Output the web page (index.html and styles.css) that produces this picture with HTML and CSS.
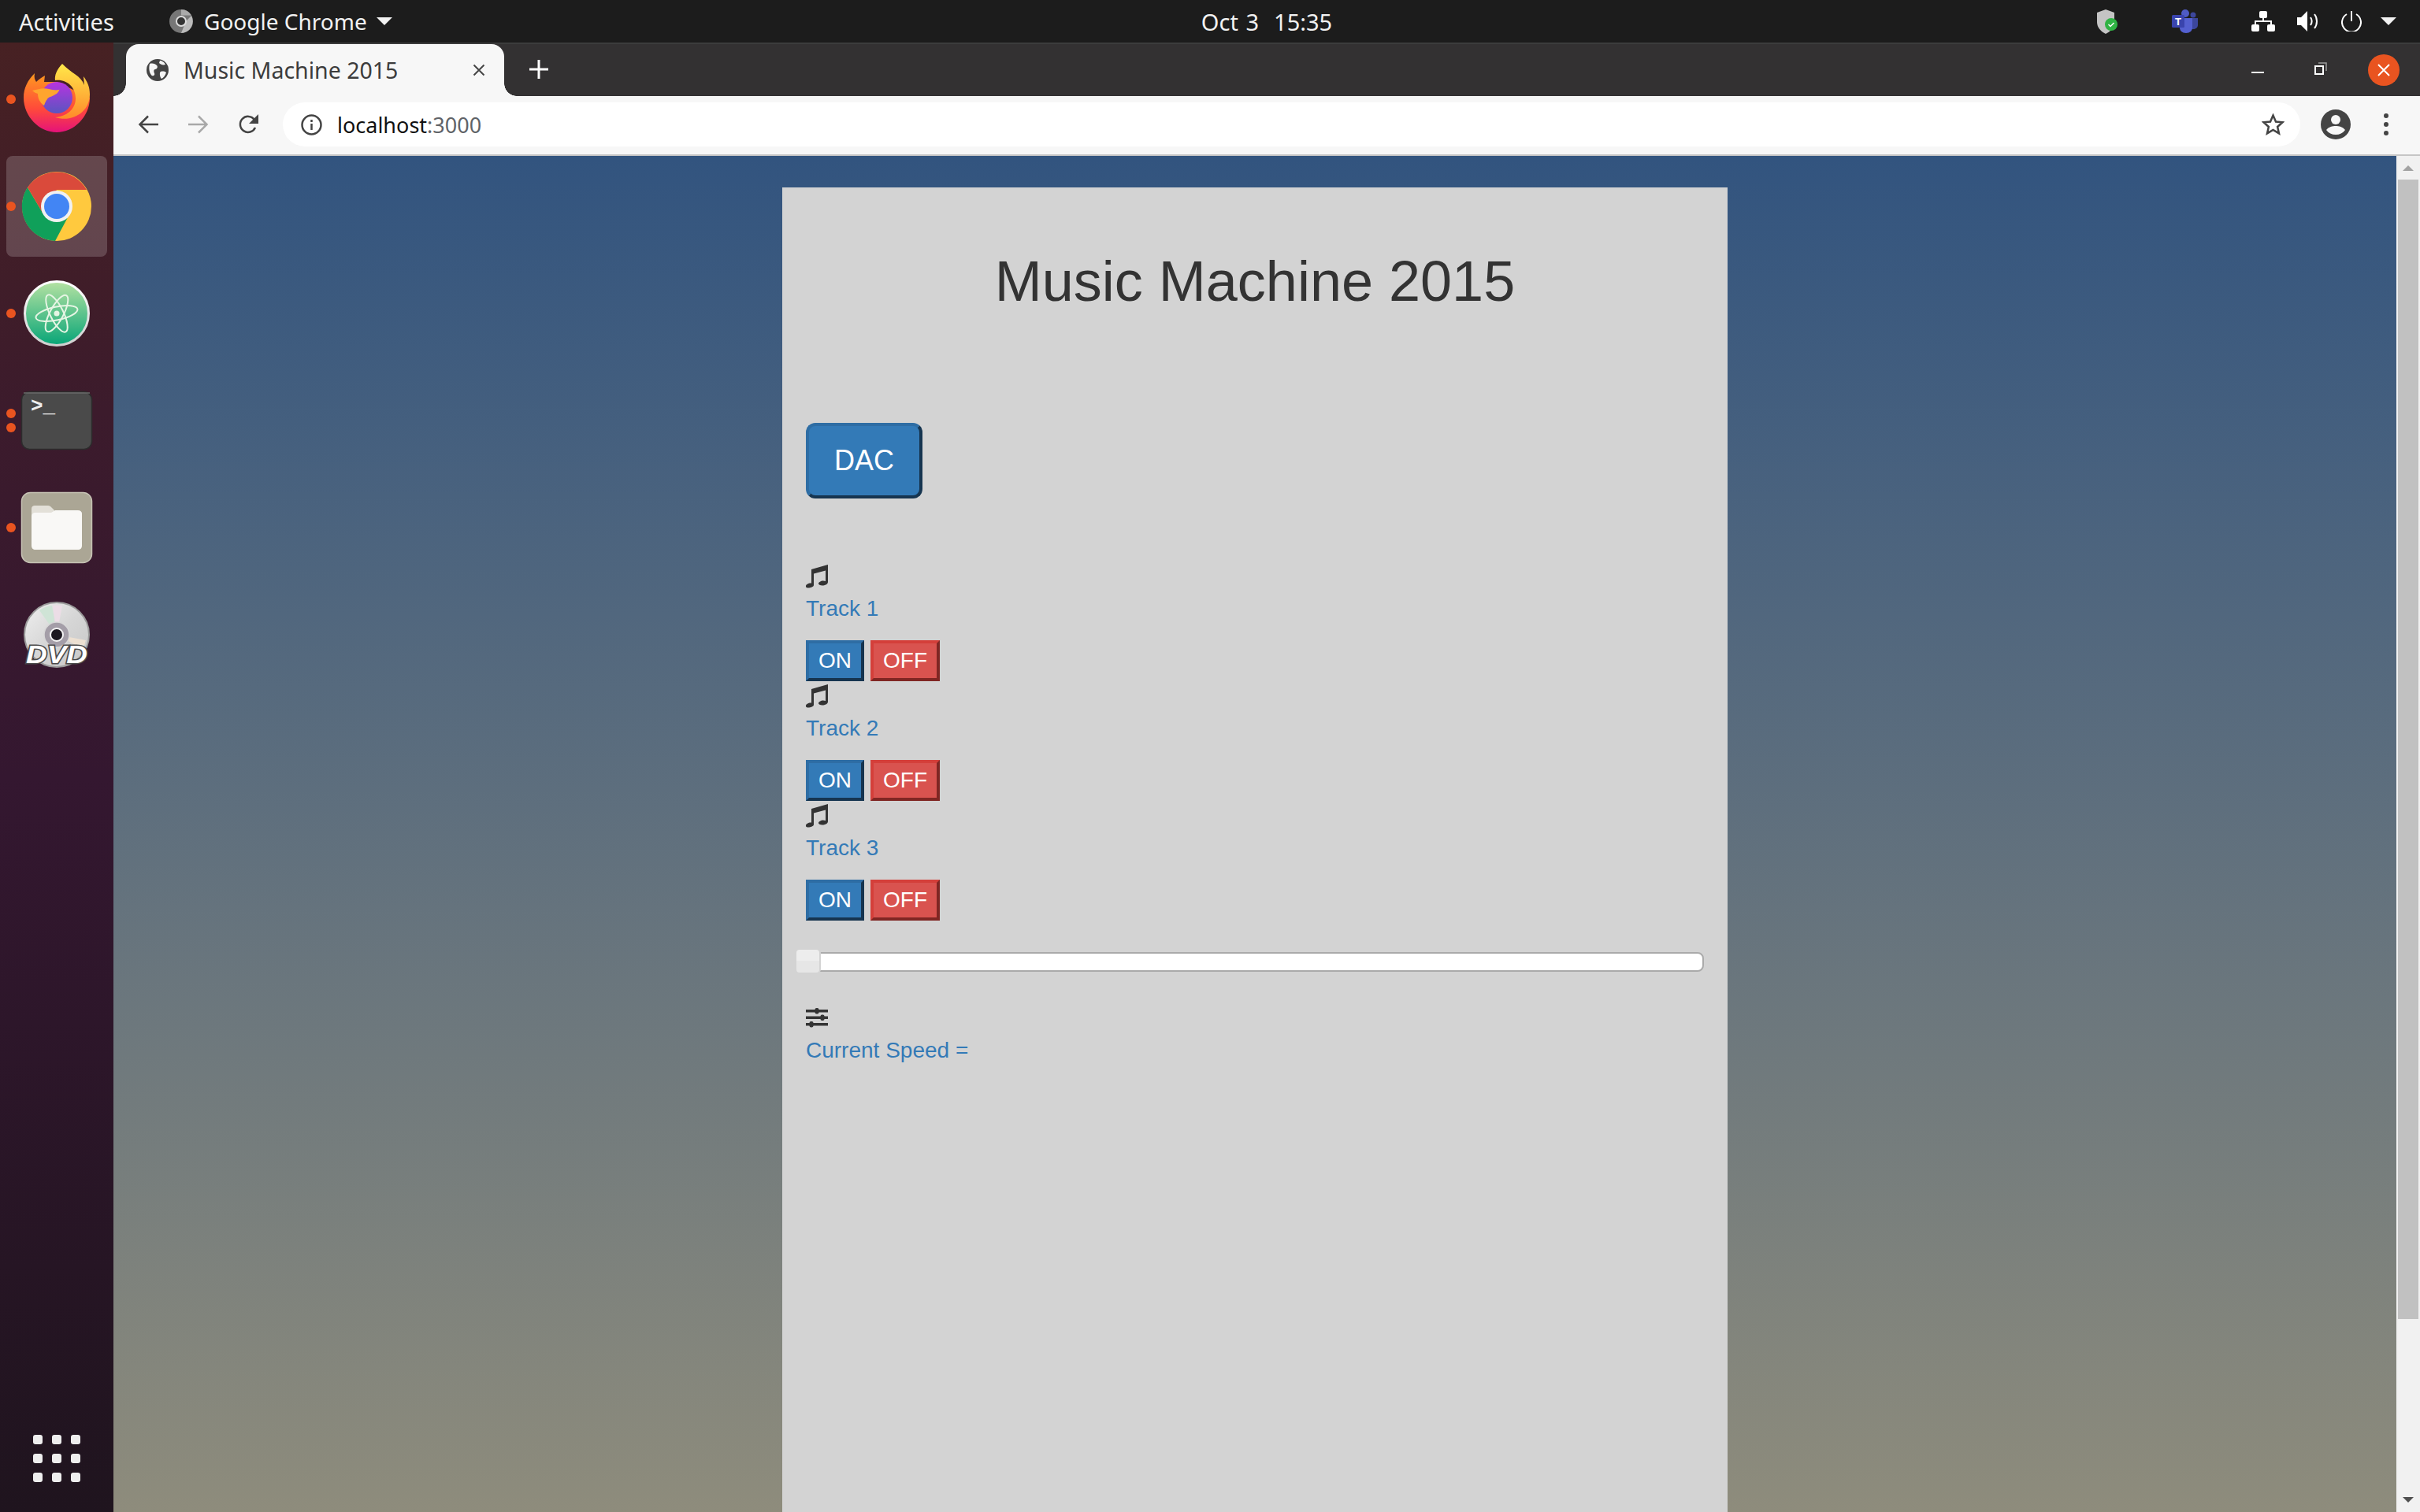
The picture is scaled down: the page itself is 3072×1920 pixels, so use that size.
FILE: index.html
```html
<!DOCTYPE html>
<html lang="en">
<head>
  <meta charset="UTF-8" />
  <title>Music Machine 2015</title>
  <link rel="stylesheet" href="styles.css">
</head>
<body>
  <div class="topbar">
    <div class="topbar-left">
      <span class="activities">Activities</span>
      <svg class="app-glyph" viewBox="0 0 30 30"><circle cx="15" cy="15" r="15" fill="#777"/><path d="M15 0a15 15 0 0 1 13 7.500H15z" fill="#aaa"/><path d="M15 30a15 15 0 0 0 13-22l-7 7z" fill="#bbb"/><circle cx="15" cy="15" r="6" fill="#333" stroke="#ddd" stroke-width="2"/></svg>
      <span class="app-name">Google Chrome</span>
      <span class="caret"></span>
    </div>
    <div class="clock">Oct 3&nbsp; 15:35</div>
    <div class="tray">
      <svg class="tray-shield" viewBox="0 0 26 31"><path d="M11 0l11 4v12c0 7-5 12-11 15C5 28 0 23 0 16V4z" fill="#c4c4c4"/><circle cx="18" cy="19" r="8" fill="#2fb344"/><path d="M14.500 19l2.500 2.500 4.500-4.500" fill="none" stroke="#fff" stroke-width="1.500"/></svg>
      <svg class="tray-teams" viewBox="0 0 33 30"><circle cx="17" cy="5" r="5" fill="#4f5bc4"/><circle cx="27" cy="7" r="3.500" fill="#3c469c"/><path d="M22 11h11v9c0 3-3 5-6 5h-5z" fill="#3c469c"/><path d="M10 11h16v12c0 4-3 7-8 7s-8-3-8-7z" fill="#5460d0"/><rect x="0" y="7" width="16" height="16" rx="1.500" fill="#3a44ad"/><text x="8" y="19.500" class="teams-t">T</text></svg>
      <svg class="tray-net" viewBox="0 0 30 26"><path d="M15 8v5M5 18v-5h20v5" fill="none" stroke="#fff" stroke-width="2"/><rect x="10" y="0" width="10" height="9" rx="2" fill="#fff"/><rect x="0" y="17" width="10" height="9" rx="2" fill="#fff"/><rect x="20" y="17" width="10" height="9" rx="2" fill="#fff"/></svg>
      <svg class="tray-vol" viewBox="0 0 28 26"><path d="M0 8h5l8-8v26l-8-8H0z" fill="#fff"/><path d="M17 8c2 3 2 7 0 10M22 4c4 5 4 13 0 18" fill="none" stroke="#fff" stroke-width="2"/></svg>
      <svg class="tray-power" viewBox="0 0 26 26"><path d="M7 4a12 12 0 1 0 12 0M13 0v13" fill="none" stroke="#fff" stroke-width="2"/></svg>
      <span class="caret caret-tray"></span>
    </div>
  </div>

  <div class="workspace">
    <nav class="dock">
      <div class="dock-slot">
        <span class="run-dot"></span>
        <svg class="dock-icon" viewBox="0 0 96 96">
          <defs>
            <linearGradient id="ffBody" x1="0" y1="0" x2="0" y2="1"><stop offset="0" stop-color="#ff9a1f"/><stop offset=".6" stop-color="#ff4a3a"/><stop offset="1" stop-color="#e5127a"/></linearGradient>
            <linearGradient id="ffFlame" x1="0" y1="0" x2="0" y2="1"><stop offset="0" stop-color="#ffe84a"/><stop offset="1" stop-color="#ff8a2a"/></linearGradient>
            <linearGradient id="ffGlobe" x1="0" y1="0" x2="0" y2="1"><stop offset="0" stop-color="#b833e0"/><stop offset="1" stop-color="#5a55c0"/></linearGradient>
          </defs>
          <path d="M6 46c0-12 5-22 14-31-1 5 0 8 2 11 3-3 7-6 11-8l-1 8h16l42 20c0 24-20 44-42 44S6 70 6 46z" fill="url(#ffBody)"/>
          <path d="M55 3c-7 7-10 15-9 21 14-2 26 8 26 23 0 14-12 23-26 24 22 7 44-7 44-29 0-10-3-16-8-23l1 11C79 18 66 15 55 3z" fill="url(#ffFlame)"/>
          <circle cx="48" cy="46" r="20" fill="url(#ffGlobe)"/>
          <path d="M17 37c8-2 14-4 21-2 4 1 9 2 13 1 1-2 0 4-5 6-4 3-9 3-10 6-2 2-3 5-4 8-6-4-8-10-8-15-3-1-5-2-7-4z" fill="#ffa52e"/>
        </svg>
      </div>
      <div class="dock-slot dock-slot-active">
        <span class="run-dot"></span>
        <svg class="dock-icon" viewBox="0 0 96 96">
          <circle cx="48" cy="48" r="44" fill="#ffc93e"/>
          <path d="M11 24L30 56l32 6-16 30A44 44 0 0 1 11 24z" fill="#10a05a"/>
          <path d="M11 24A44 44 0 0 1 86 27H48L30 56z" fill="#da4a3b"/>
          <circle cx="48" cy="48" r="20" fill="#f1f1f1"/>
          <circle cx="48" cy="48" r="16" fill="#4285f4"/>
        </svg>
      </div>
      <div class="dock-slot">
        <span class="run-dot"></span>
        <svg class="dock-icon" viewBox="0 0 96 96">
          <defs>
            <linearGradient id="atomBg" x1="0" y1="0" x2="0" y2="1"><stop offset="0" stop-color="#b5e2a2"/><stop offset="1" stop-color="#07a577"/></linearGradient>
            <linearGradient id="atomRim" x1="0" y1="0" x2="0" y2="1"><stop offset="0" stop-color="#ffffff"/><stop offset="1" stop-color="#cfcfcf"/></linearGradient>
          </defs>
          <circle cx="48" cy="48" r="40.500" fill="url(#atomBg)" stroke="url(#atomRim)" stroke-width="3"/>
          <g fill="none" stroke="#e6f5e4" stroke-width="2">
            <ellipse cx="48" cy="48" rx="27" ry="8.500" transform="rotate(-12 48 48)"/>
            <ellipse cx="48" cy="48" rx="26" ry="8.500" transform="rotate(64 48 48)"/>
            <ellipse cx="48" cy="48" rx="26" ry="8.500" transform="rotate(118 48 48)"/>
          </g>
          <circle cx="48" cy="48" r="3.500" fill="#e6f5e4"/>
        </svg>
      </div>
      <div class="dock-slot">
        <span class="run-dot run-dot-upper"></span>
        <span class="run-dot run-dot-lower"></span>
        <svg class="dock-icon" viewBox="0 0 96 96">
          <rect x="3.500" y="11.500" width="89" height="73" rx="10" fill="#4a4a4a" stroke="#2c2c2c" stroke-width="1.500"/>
          <path d="M6 13h84" stroke="#6a6a6a" stroke-width="1.500"/>
          <text x="15" y="37" class="term-prompt">&gt;_</text>
        </svg>
      </div>
      <div class="dock-slot">
        <span class="run-dot"></span>
        <svg class="dock-icon" viewBox="0 0 96 96">
          <rect x="3.500" y="3.500" width="89" height="89" rx="11" fill="#aba695" stroke="#c6c2b4" stroke-width="1.500"/>
          <path d="M16 24c0-3 2-4 4-4h6 c0 0 0 0 0 0h2l2 0h7c2 0 3 1 4 2l4 4v10H16z" fill="#e3e0d8"/>
          <path d="M16 34c0-3 2-5 5-5h20l5-3h29c3 0 5 2 5 4v41c0 3-2 5-5 5H21c-3 0-5-2-5-5z" fill="#f9f8f6"/>
        </svg>
      </div>
      <div class="dock-slot">
        <svg class="dock-icon" viewBox="0 0 96 96">
          <defs>
            <linearGradient id="discBg" x1="0" y1="0" x2="1" y2="1"><stop offset="0" stop-color="#efefef"/><stop offset=".5" stop-color="#d6d6d6"/><stop offset="1" stop-color="#c6c6c6"/></linearGradient>
          </defs>
          <circle cx="48" cy="48" r="41" fill="url(#discBg)" stroke="#9a9a9a" stroke-width="2"/>
          <path d="M48 48L26 17a38 38 0 0 1 16-6z" fill="#cfe4d6"/>
          <path d="M48 48L43 11a38 38 0 0 1 12 0z" fill="#ecdde6"/>
          <path d="M48 48L85 55a38 38 0 0 1-4 11z" fill="#ece0d2"/>
          <circle cx="48" cy="48" r="16" fill="#a49ea8" stroke="#d8d8d8" stroke-width="1.500"/>
          <circle cx="48" cy="48" r="8" fill="#1c1820" stroke="#f5f5f5" stroke-width="2"/>
          <text x="9" y="84" textLength="78" lengthAdjust="spacingAndGlyphs" class="dvd-mark">DVD</text>
        </svg>
      </div>
      <div class="apps-grid">
        <span></span><span></span><span></span>
        <span></span><span></span><span></span>
        <span></span><span></span><span></span>
      </div>
    </nav>

    <div class="browser">
      <div class="tabstrip">
        <div class="tab">
          <svg class="favicon" viewBox="0 0 28 28"><circle cx="14" cy="14" r="14" fill="#444"/><path d="M4 6c4-1 7 0 9 2s0 5-2 5-2 3-1 5-1 4-3 3S2 14 4 6zM18 16c3-1 6 0 7 1-1 4-4 7-6 8-2-2-3-8-1-9zM17 2c2 0 6 2 7 5-3 1-6 0-8-2z" fill="#f6f6f6"/></svg>
          <span class="tab-title">Music Machine 2015</span>
          <svg class="tab-close" viewBox="0 0 16 16"><path d="M1.500 1.500l13 13M14.500 1.500l-13 13" stroke="#444" stroke-width="2"/></svg>
        </div>
        <svg class="new-tab" viewBox="0 0 24 24"><path d="M12 0v24M0 12h24" stroke="#fff" stroke-width="3"/></svg>
        <div class="window-controls">
          <span class="win-min"></span>
          <svg class="win-restore" viewBox="0 0 16 16"><path d="M5 1h10v10" fill="none" stroke="#9a9a9a" stroke-width="1.500"/><rect x="1" y="5" width="10" height="10" fill="none" stroke="#fff" stroke-width="2"/></svg>
          <span class="win-close"><svg viewBox="0 0 16 16"><path d="M1 1l14 14M15 1L1 15" stroke="#fff" stroke-width="2"/></svg></span>
        </div>
      </div>

      <div class="toolbar">
        <svg class="nav-icon" viewBox="0 0 26 24"><path d="M26 12H3M13 1.500L2.500 12 13 22.500" fill="none" stroke="#444" stroke-width="2.500"/></svg>
        <svg class="nav-icon nav-forward" viewBox="0 0 26 24"><path d="M0 12h23M13 1.500L23.500 12 13 22.500" fill="none" stroke="#a8a8a8" stroke-width="2.500"/></svg>
        <svg class="nav-icon nav-reload" viewBox="0 0 26 26"><path d="M21 17a10 10 0 1 1-1-10" fill="none" stroke="#444" stroke-width="2.500"/><path d="M25 0v12H13z" fill="#444"/></svg>
        <div class="omnibox">
          <svg class="info-icon" viewBox="0 0 27 27"><circle cx="13.500" cy="13.500" r="12" fill="none" stroke="#444" stroke-width="2.500"/><path d="M13.500 12v8M13.500 7v3" stroke="#444" stroke-width="2.500"/></svg>
          <span class="url">localhost<span class="url-port">:3000</span></span>
          <svg class="star-icon" viewBox="0 0 29 28"><path d="M14.500 2.500l3.500 8 8.500.8-6.400 5.700 1.900 8.400-7.500-4.400-7.500 4.400 1.900-8.400L2.500 11.300l8.500-.8z" fill="none" stroke="#444" stroke-width="2.500"/></svg>
        </div>
        <svg class="avatar-icon" viewBox="0 0 38 38"><circle cx="19" cy="19" r="19" fill="#444"/><circle cx="19" cy="13" r="6" fill="#f7f7f7"/><path d="M7 26c3-4 8-5 12-5s9 1 12 5c-3 4-7 6-12 6s-9-2-12-6z" fill="#f7f7f7"/></svg>
        <div class="kebab"><span></span><span></span><span></span></div>
      </div>

      <div class="viewport">
        <div class="page">
          <main class="card">
            <h1>Music Machine 2015</h1>
            <button class="btn-dac">DAC</button>

            <section class="tracks">
              <div class="track">
                <svg class="glyph" viewBox="0 0 28 40"><path class="note" d="M7 10L28 4V26c0 3-4 4.500-7 4.500s-5-1-5-2.500 3-3.500 6-3.500c1 0 2 .2 3 .5V11.500L10 15.500V30c0 2-4 3.500-7 3.500S0 32.500 0 31s3-3.500 6-3.500c.5 0 .8 0 1 .1z"/></svg>
                <div class="label">Track 1</div>
                <div class="switches"><button class="btn-on">ON</button><button class="btn-off">OFF</button></div>
              </div>
              <div class="track">
                <svg class="glyph" viewBox="0 0 28 40"><path class="note" d="M7 10L28 4V26c0 3-4 4.500-7 4.500s-5-1-5-2.500 3-3.500 6-3.500c1 0 2 .2 3 .5V11.500L10 15.500V30c0 2-4 3.500-7 3.500S0 32.500 0 31s3-3.500 6-3.500c.5 0 .8 0 1 .1z"/></svg>
                <div class="label">Track 2</div>
                <div class="switches"><button class="btn-on">ON</button><button class="btn-off">OFF</button></div>
              </div>
              <div class="track">
                <svg class="glyph" viewBox="0 0 28 40"><path class="note" d="M7 10L28 4V26c0 3-4 4.500-7 4.500s-5-1-5-2.500 3-3.500 6-3.500c1 0 2 .2 3 .5V11.500L10 15.500V30c0 2-4 3.500-7 3.500S0 32.500 0 31s3-3.500 6-3.500c.5 0 .8 0 1 .1z"/></svg>
                <div class="label">Track 3</div>
                <div class="switches"><button class="btn-on">ON</button><button class="btn-off">OFF</button></div>
              </div>
            </section>

            <div class="slider"><span class="slider-handle"></span></div>

            <svg class="glyph" viewBox="0 0 28 40"><path class="note" d="M0 9h28v3.500H0zM0 17.500h28V21H0zM0 26h28v3.500H0z"/><rect class="note" x="11.500" y="7" width="5" height="7.500" rx="2"/><rect class="note" x="18.500" y="15.500" width="5" height="7.500" rx="2"/><rect class="note" x="4.500" y="24" width="5" height="7.500" rx="2"/></svg>
            <div class="label speed-label">Current Speed =</div>
          </main>
        </div>
        <div class="scrollbar">
          <span class="arrow-up"></span>
          <span class="scroll-thumb"></span>
          <span class="arrow-down"></span>
        </div>
      </div>
    </div>
  </div>
</body>
</html>
```

FILE: styles.css
```css
* {
  box-sizing: border-box;
}

html,
body {
  height: 100%;
}

body {
  margin: 0;
  display: flex;
  flex-direction: column;
  height: 1920px;
  overflow: hidden;
  font-family: 'Liberation Sans', Arial, sans-serif;
  background: #1c1c1c;
}

/* gnome top bar */
.topbar {
  position: relative;
  flex: none;
  height: 54px;
  display: flex;
  align-items: center;
  justify-content: space-between;
  background: #1c1c1c;
  color: #f2f2f2;
  font-family: 'Noto Sans', sans-serif;
  font-size: 28px;
}

.topbar-left {
  display: flex;
  align-items: center;
  padding-left: 24px;
}

.activities {
  width: 191px;
  font-size: 29px;
}

.app-glyph {
  width: 30px;
  height: 30px;
  margin-right: 14px;
}

.app-name {
  margin-right: 12px;
}

.caret {
  width: 0;
  height: 0;
  border-left: 10px solid transparent;
  border-right: 10px solid transparent;
  border-top: 10px solid #f2f2f2;
}

.clock {
  position: absolute;
  left: 1400px;
  width: 416px;
  font-size: 29px;
  word-spacing: 2px;
  text-align: center;
}

.tray {
  display: flex;
  align-items: center;
  padding-right: 30px;
}

.tray-shield {
  width: 26px;
  height: 31px;
  margin-right: 69px;
}

.tray-teams {
  width: 33px;
  height: 30px;
  margin-right: 68px;
}

.tray-net {
  width: 30px;
  height: 26px;
  margin-right: 28px;
}

.tray-vol {
  width: 28px;
  height: 26px;
  margin-right: 28px;
}

.tray-power {
  width: 26px;
  height: 26px;
  margin-right: 24px;
}

.teams-t {
  fill: #fff;
  font-family: 'Liberation Sans', sans-serif;
  font-size: 13px;
  font-weight: bold;
  text-anchor: middle;
}

.workspace {
  flex: 1;
  min-height: 0;
  display: flex;
}

/* ubuntu dock */
.dock {
  flex: none;
  width: 144px;
  display: flex;
  flex-direction: column;
  align-items: center;
  padding-top: 4px;
  background: linear-gradient(#472123, #3c1b2c 25%, #341730 50%, #1f141e);
}

.dock-slot {
  position: relative;
  flex: none;
  width: 144px;
  height: 136px;
  display: flex;
  align-items: center;
  justify-content: center;
}

.dock-slot-active::before {
  content: "";
  position: absolute;
  left: 8px;
  top: 4px;
  width: 128px;
  height: 128px;
  border-radius: 8px;
  background: rgba(255, 255, 255, 0.18);
}

.dock-icon {
  position: relative;
  width: 96px;
  height: 96px;
}

.run-dot {
  position: absolute;
  left: 8px;
  top: 62px;
  width: 12px;
  height: 12px;
  border-radius: 50%;
  background: #e95420;
}

.run-dot-upper {
  top: 53px;
}

.run-dot-lower {
  top: 71px;
}

.term-prompt {
  fill: #eee;
  font-family: 'Liberation Mono', monospace;
  font-size: 26px;
  font-weight: bold;
}

.dvd-mark {
  fill: #fff;
  stroke: #4a4a4a;
  stroke-width: 3px;
  paint-order: stroke;
  font-family: 'Liberation Sans', sans-serif;
  font-size: 32px;
  font-style: italic;
  font-weight: bold;
}

.apps-grid {
  margin-top: auto;
  margin-bottom: 38px;
  display: grid;
  grid-template-columns: repeat(3, 12px);
  grid-auto-rows: 12px;
  gap: 12px;
}

.apps-grid span {
  border-radius: 3px;
  background: #eee;
}

/* chrome window */
.browser {
  flex: 1;
  min-width: 0;
  display: flex;
  flex-direction: column;
}

.tabstrip {
  flex: none;
  height: 68px;
  display: flex;
  align-items: flex-start;
  background: #333132;
  border-top: 2px solid #3c3c3c;
}

.tab {
  position: relative;
  width: 480px;
  height: 66px;
  margin-left: 16px;
  display: flex;
  align-items: center;
  padding: 0 24px 0 26px;
  border-radius: 16px 16px 0 0;
  background: #f7f7f7;
}

.tab::before,
.tab::after {
  content: "";
  position: absolute;
  bottom: 0;
  width: 16px;
  height: 16px;
  background: radial-gradient(circle at 0 0, #333132 15.500px, #f7f7f7 16px);
}

.tab::before {
  left: -16px;
}

.tab::after {
  right: -16px;
  background: radial-gradient(circle at 100% 0, #333132 15.500px, #f7f7f7 16px);
}

.favicon {
  width: 28px;
  height: 28px;
  margin-right: 19px;
}

.tab-title {
  flex: 1;
  color: #3c3c3c;
  font-family: 'Noto Sans', sans-serif;
  font-size: 28.500px;
  white-space: nowrap;
}

.tab-close {
  width: 16px;
  height: 16px;
}

.new-tab {
  width: 24px;
  height: 24px;
  margin: 20px 0 0 32px;
}

.window-controls {
  margin-left: auto;
  display: flex;
  align-items: center;
  height: 66px;
  padding-right: 26px;
}

.win-min {
  width: 16px;
  height: 2px;
  margin: 6px 64px 0 0;
  background: #fff;
}

.win-restore {
  width: 16px;
  height: 16px;
  margin: -4px 52px 0 0;
}

.win-close {
  width: 40px;
  height: 40px;
  display: flex;
  align-items: center;
  justify-content: center;
  border-radius: 50%;
  background: #e95420;
}

.win-close svg {
  width: 16px;
  height: 16px;
}

.toolbar {
  flex: none;
  height: 76px;
  display: flex;
  align-items: center;
  padding: 0 0 2px 31px;
  background: #f7f7f7;
  border-bottom: 2px solid #c6c6c6;
}

.nav-icon {
  width: 26px;
  height: 24px;
  margin-right: 38px;
}

.nav-reload {
  height: 26px;
  margin-right: 30px;
}

.omnibox {
  width: 2561px;
  height: 56px;
  display: flex;
  align-items: center;
  padding: 0 20px 0 23px;
  border-radius: 28px;
  background: #fff;
}

.info-icon {
  width: 27px;
  height: 27px;
  margin-right: 19px;
}

.url {
  flex: 1;
  color: #111;
  font-family: 'Noto Sans', sans-serif;
  font-size: 27px;
}

.url-port {
  color: #5f6368;
}

.star-icon {
  width: 29px;
  height: 28px;
}

.avatar-icon {
  width: 38px;
  height: 38px;
  margin-left: 26px;
}

.kebab {
  display: flex;
  flex-direction: column;
  gap: 5px;
  margin-left: 42px;
}

.kebab span {
  width: 6px;
  height: 6px;
  border-radius: 50%;
  background: #444;
}

.viewport {
  flex: 1;
  min-height: 0;
  display: flex;
}

.page {
  flex: 1;
  min-width: 0;
  display: flex;
  justify-content: center;
  overflow: hidden;
  padding-top: 40px;
  background: linear-gradient(#32547f, #8e8c7c);
}

.scrollbar {
  flex: none;
  width: 30px;
  display: flex;
  flex-direction: column;
  align-items: center;
  padding-top: 12px;
  background: #f1f1f1;
}

.arrow-up,
.arrow-down {
  width: 0;
  height: 0;
  border-left: 7px solid transparent;
  border-right: 7px solid transparent;
}

.arrow-up {
  border-bottom: 7px solid #a3a3a3;
}

.arrow-down {
  margin-top: 226px;
  border-top: 7px solid #505050;
}

.scroll-thumb {
  flex: none;
  width: 26px;
  height: 1447px;
  margin-top: 11px;
  background: #c1c1c1;
}

/* the app itself */
.card {
  width: 1200px;
  height: 1800px;
  padding: 80px 30px 0;
  background: #d3d3d3;
}

h1 {
  margin: 0 0 140px;
  color: #333;
  font-size: 72px;
  font-weight: 500;
  line-height: 79px;
  text-align: center;
}

button {
  display: block;
  color: #fff;
  font-family: inherit;
  border-style: outset;
  border-width: 4px;
}

.btn-dac {
  width: 148px;
  height: 96px;
  margin-bottom: 80px;
  padding: 0;
  font-size: 36px;
  border-radius: 12px;
  background: #337ab7;
  border-color: #2e6da4;
}

.glyph {
  display: block;
  width: 28px;
  height: 40px;
}

.note {
  fill: #333;
}

.label {
  height: 40px;
  color: #337ab7;
  font-size: 28px;
  line-height: 40px;
}

.speed-label {
  margin-top: 1px;
}

.switches {
  display: flex;
  gap: 8px;
  margin-top: 20px;
}

.btn-on,
.btn-off {
  height: 52px;
  padding: 0;
  font-size: 28px;
}

.btn-on {
  width: 74px;
  background: #337ab7;
  border-color: #2e6da4;
}

.btn-off {
  width: 88px;
  background: #d9534f;
  border-color: #d43f3a;
}

.slider {
  position: relative;
  height: 25px;
  margin: 40px 0 39px;
  border: 2px solid #aaa;
  border-radius: 8px;
  background: #fff;
}

.slider-handle {
  position: absolute;
  left: -16px;
  top: -7px;
  width: 33px;
  height: 33px;
  border: 2px solid #d3d3d3;
  border-radius: 6px;
  background: linear-gradient(#ededed 50%, #e6e6e6 50%);
}
```
